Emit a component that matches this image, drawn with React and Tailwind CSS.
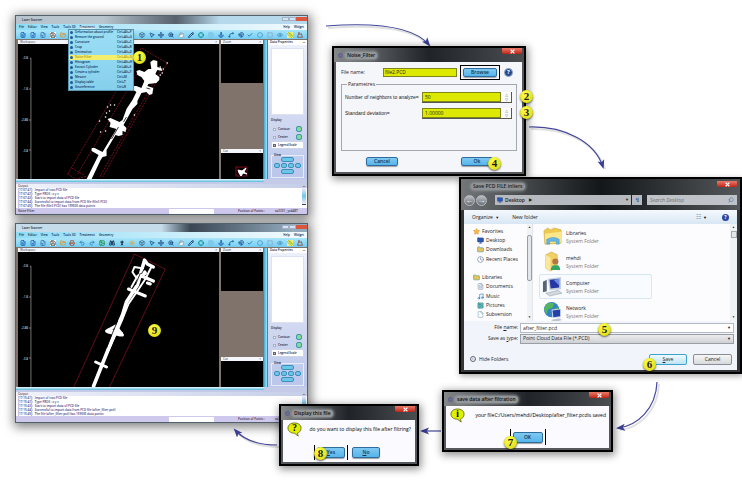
import React from "react";
import {
  FileText, FilePlus, FileInput, Save, FolderOpen, Printer, Undo2, Redo2, Image, Binoculars, PersonStanding,
  Sun, Box, MousePointer2, Move, ZoomIn, Hand, Pencil, Crosshair, Grid3x3, Anchor, Spline, Magnet, Check,
  Circle, Square, Eye, Ruler, Mountain, Search, ChevronUp, Star, Monitor, Folder, Clock, Music, FileIcon,
} from "lucide-react";

const TOOLS = [
  [FileText, "text-[#1d5fb5]"], [FilePlus, "text-[#1d5fb5]"], [FileInput, "text-[#3d6db0]"], [Save, "bg-white text-[#444]"],
  [FolderOpen, "text-[#e0932b]"], [Printer, "text-[#a35b4a]"], [Undo2, "text-[#2973b0]"], [Redo2, "text-[#2973b0]"],
  [Image, "text-[#168a3a]"], [Binoculars, "text-[#17314f]"], [PersonStanding, "text-[#111]"], [Sun, "text-[#e7a13c]"],
  [Box, "text-[#3a5f86]"], [MousePointer2, "text-[#1c3f7c]"], [Move, "text-[#1c3f7c]"], [ZoomIn, "text-[#1c3f7c]"],
  [Hand, "fill-white text-[#8899aa]"], [Pencil, "text-[#11285e]"], [Crosshair, "text-[#0c8f8f]"], [Grid3x3, "text-[#7cc4e8]"],
  [Anchor, "text-[#1355a5]"], [Spline, "text-[#1355a5]"], [Magnet, "text-[#123b86]"], [Check, "text-[#1660b2]"],
  [Circle, "text-[#4c96cf]"], [Square, "text-[#8ba6c9]"], [Eye, "text-[#4c90c0]"], [Ruler, "bg-[#e6f07a] text-[#9aa51f]"],
  [Mountain, "text-[#8c3f2e]"],
];

const MENU_ITEMS = [
  ["Deformation about profile", "Ctrl+Alt+P"], ["Remove the ground", "Ctrl+Alt+G"], ["Curvature", "Ctrl+Alt+C"],
  ["Crop", "Ctrl+Alt+R"], ["Decimation", "Ctrl+Alt+D"], ["Noise Filter", "Ctrl+Alt+N"], ["Histogram", "Ctrl+Alt+H"],
  ["Extract Cylinder", "Ctrl+Alt+E"], ["Create a cylinder", "Ctrl+Alt+Y"], ["Mesure", "Ctrl+M"],
  ["Display table", "Ctrl+T"], ["Georeference", "Ctrl+R"],
];

function Badge({ n, className }) {
  return (
    <span className={`absolute z-20 flex h-[13px] w-[13px] items-center justify-center rounded-full bg-[#eeee22] bg-radial-[at_40%_30%] from-[#ffff4a] to-[#d6d30c] font-['Liberation_Serif',serif] text-[11px] leading-none font-bold text-[#222] shadow-[0_1px_2px_rgba(0,0,0,0.6)] ${className}`}>
      {n}
    </span>
  );
}

function CloseButton({ className = "" }) {
  return (
    <button aria-label="Close" className={`flex h-[6px] w-[20px] shrink-0 items-center justify-center rounded-b-xs bg-linear-to-b from-[#e87868] to-[#c01c10] ${className}`}>
      <svg viewBox="0 0 8 8" className="h-[5px] w-[5px]"><path d="M1 1L7 7M7 1L1 7" stroke="#fff" strokeWidth="2" /></svg>
    </button>
  );
}

function RawCloud() {
  return (
    <svg viewBox="18 43 202 135" preserveAspectRatio="none" className="h-full w-full">
      <Axis top={57} bottom={178} />
      <g fill="none" stroke="#a3152a" strokeWidth="0.7" strokeDasharray="2 1">
        <path d="M68 173L142 47L168 62L103 176M78 173L138 72M100 176L163 66M68 173L76 178L88 175M72 167L84 174" />
      </g>
      <path fill="#fff" d="M151 61L154 59L158 60L158 66L162 67L163 70L158 69L156 73L160 76L160 79L157 82L149 83L148 85L154 87L153 93L150 94L147 91L142 92L138 100L138 103L133 108L128 117L124 124L127 127L126 131L123 130L123 134L119 135L116 134L107 149L107 155L103 156L101 159L92 178L87 178L99 154L92 150L92 147L95 147L103 151L114 133L117 128L110 126L111 122L108 118L111 117L120 121L123 119L127 108L133 99L137 91L134 89L134 85L137 85L142 87L145 80L142 76L138 74L137 70L140 69L145 71L149 68L152 68Z" />
      <path stroke="#111" strokeWidth="0.8" fill="none" d="M127 116L124 121M119 126L112 138M147 87L151 88" />
      <g fill="#fff">
        {[[108, 106], [111, 104], [115, 104], [107, 112], [110, 110], [106, 116], [100, 120], [106, 130], [101, 131], [161, 66], [164, 68], [163, 72], [168, 62], [161, 74], [135, 114]].map(([x, y]) => (
          <circle key={`${x}-${y}`} cx={x} cy={y} r="0.8" />
        ))}
      </g>
    </svg>
  );
}

function FilteredCloud() {
  return (
    <svg viewBox="18 251 202 135" preserveAspectRatio="none" className="h-full w-full">
      <Axis top={265} bottom={386} />
      <path fill="none" stroke="#a3152a" strokeWidth="0.6" d="M74 386L135 253L166 268L110 386" />
      <g fill="none" stroke="#fff" strokeLinecap="round" strokeLinejoin="round">
        <path strokeWidth="3.6" d="M145 260L142 270L138 284L127 301L123 314L116 330L108 350L94 385" />
        <path strokeWidth="2" d="M152 266L146 278L138 290L129 303L123 318L115 336L106 356" />
        <path strokeWidth="3.4" d="M145 259L148 263L154 266M142 275L154 280" />
        <path strokeWidth="3" d="M129 288L146 295" />
        <path strokeWidth="2" d="M141 267L135 266L133 271L137 277L132 286" />
        <path strokeWidth="3" d="M96 361L107 366" />
        <path strokeWidth="5" d="M139 276L145 272M109 330L121 333" />
        <path strokeWidth="3" d="M107 330L116 325L123 334M148 282L151 283" />
      </g>
      <path d="M141 272L136 284M118 320L113 332L107 347M146 266L142 273" stroke="#000" strokeWidth="0.8" fill="none" />
    </svg>
  );
}

function Axis({ top, bottom }) {
  return (
    <g>
      <path d={`M30 ${top}H31V${bottom}M29 ${top + 31}H31M29 ${top + 62}H31M29 ${top + 92}H31`} fill="none" stroke="#bbb" strokeWidth="0.6" />
      {["-0.8", "-1.8", "-2.88", "-3.8"].map((t, i) => (
        <text key={t} x="28" y={top + 1 + i * 31} textAnchor="end" fontSize="3" fill="#eee">{t}</text>
      ))}
    </g>
  );
}

function PaneTitle({ children }) {
  return (
    <div className="flex h-[4px] shrink-0 items-center justify-between bg-[#f4f6fb] px-[2px] text-[3px] leading-none text-[#334]">
      <span>{children}</span><span>×</span>
    </div>
  );
}

function SidePanel() {
  return (
    <aside className="flex w-[39px] shrink-0 flex-col bg-linear-to-b from-[#eef2fb] via-[#d5dbf2] to-[#b9c6ea] px-[3px] text-[3px] leading-none font-semibold text-[#223]">
      <div className="-mx-[3px] flex h-[5px] items-center justify-between bg-white px-[2px]"><span>Data Properties</span><span>▪▪</span></div>
      <div className="mt-[3px] h-[67px] border border-[#dde2f0] bg-white" />
      <div className="mt-[4px] h-[6px]">Display</div>
      {["Contour", "Center"].map((t) => (
        <label key={t} className="flex h-[8px] items-center gap-[2px] pl-[2px]">
          <input type="checkbox" className="h-[3px] w-[3px] appearance-none border border-[#9fb0d2] bg-white" />
          <span className="flex-1">{t}</span>
          <span className="mr-[2px] h-[6px] w-[6px] rounded-xs border border-[#3b99a8] bg-[#86d79c]" />
        </label>
      ))}
      <label className="flex h-[8px] items-center gap-[2px] border border-[#cdd5ea] bg-white pl-px">
        <input type="checkbox" defaultChecked className="h-[3px] w-[3px] appearance-none border border-[#667] bg-[#a8b8cf]" />
        Legend Scale
      </label>
      <fieldset className="mt-[5px] flex h-[24px] flex-col items-center border border-[#e6ebf8]">
        <legend className="ml-[2px] h-[3px] text-[3px]">View</legend>
        <button className="h-[5px] w-[13px] rounded-xs border border-[#3b8fb8] bg-[#6cc6ea]" aria-label="Top" />
        <div className="my-px flex gap-px">
          {["Left", "Front", "Right", "Back"].map((t) => (
            <button key={t} aria-label={t} className="h-[5px] w-[6px] rounded-xs border border-[#3b8fb8] bg-[#6cc6ea]" />
          ))}
        </div>
        <button className="h-[5px] w-[13px] rounded-xs border border-[#3b8fb8] bg-[#6cc6ea]" aria-label="Bottom" />
      </fieldset>
    </aside>
  );
}

function ScannerWindow({ className, titleClass, cloud, cut, file, status, times, menuOpen, children }) {
  return (
    <section className={`absolute flex h-[200px] w-[293px] flex-col border border-[#52616e] bg-[#d8def4] shadow-[1px_2px_10px_2px_rgba(0,0,0,0.5)] ${className}`}>
      <header className={`flex h-[8px] shrink-0 items-center justify-between pl-[6px] text-[3px] leading-none font-semibold text-[#223] ${titleClass}`}>
        <span>Laser Scanner</span>
        <div className="flex h-[5px] items-center self-start">
          <button aria-label="Minimize" className="h-[4px] w-[7px] border border-[#a2b2c4] bg-[#d7e3ee]" />
          <button aria-label="Maximize" className="h-[4px] w-[7px] border border-[#a2b2c4] bg-[#d7e3ee]" />
          <button aria-label="Close" className="h-[4px] w-[11px] bg-[#d9573f]" />
        </div>
      </header>
      <nav className="flex h-[6px] shrink-0 items-center gap-[4px] bg-linear-to-r from-[#8edcf6] via-[#c4ecfa] to-[#f4fafd] px-[3px] text-[3px] leading-none font-semibold text-[#0e2a4c]">
        {["File", "Editor", "View", "Tools", "Tools 3D", "Treatment", "Geometry"].map((t) => (
          <button key={t} className={menuOpen && t === "Treatment" ? "bg-[#d8f3fc] whitespace-nowrap" : "whitespace-nowrap"}>{t}</button>
        ))}
        <button className="ml-auto">Help</button>
        <button>Widget</button>
      </nav>
      <div className="flex h-[9px] shrink-0 items-center justify-between bg-linear-to-b from-[#a9e5fa] to-[#72cdf2] px-[4px]">
        {TOOLS.map(([Icon, c], i) => <Icon key={i} className={`h-[6px] w-[6px] ${c}`} strokeWidth={3} />)}
      </div>
      <div className="flex h-[140px] shrink-0 bg-[#7f736b] pt-px">
        <div className="mx-[2px] flex min-w-0 flex-1 flex-col bg-black">
          <PaneTitle>Workspace</PaneTitle>
          <div className="h-[135px]">{cloud}</div>
        </div>
        <div className="flex w-[42px] flex-col justify-between">
          <div className="h-[43px] bg-black"><PaneTitle>Zoom</PaneTitle></div>
          <div className="h-[30px] bg-black"><PaneTitle>Cut</PaneTitle>{cut}</div>
        </div>
        <div className="mx-px w-[3px] bg-linear-to-r from-[#3eaad4] to-[#9be4fa]" />
        <SidePanel />
      </div>
      <div className="flex h-[5px] shrink-0 bg-[#c3cbe8]">
        <div className="h-[3px] w-[248px] bg-linear-to-b from-[#e9f8fd] to-[#4eb9da]" />
      </div>
      <div className="flex h-[4px] shrink-0 items-center justify-between bg-linear-to-r from-[#f1f3fa] to-[#c5cee9] px-[2px] text-[3px] leading-none text-[#412]"><span>Output</span><span>▪▪</span></div>
      <div className="flex h-[20px] shrink-0 justify-between bg-white text-[3px] leading-[4px] font-semibold text-[#3b3b86]">
        <ul className="pl-[2px]">
          {["Import of tran PCD file", "Type PRDS : x y z", "Start to import data of PCD file", `Successful to import data from PCD file (${file})`, `The file (${file}) has 159505 data points`].map((t, i) => (
            <li key={t} className="flex h-[4px] gap-[2px] whitespace-nowrap"><span>[{times}:{41 + i}]:</span>{t}</li>
          ))}
        </ul>
        <div className="mr-px h-[17px] w-[4px] border-b border-[#445] bg-linear-to-b from-[#eef] via-[#6cc6ea] to-[#eef]" />
      </div>
      <footer className="flex flex-1 items-center bg-[#cfc9ee] px-[2px] text-[3px] leading-none font-semibold text-[#334]">
        <span className="w-[151px]">{status}</span>
        <span className="h-[5px] w-[45px] bg-white" />
        <span className="ml-[24px] whitespace-nowrap">Position of Points :</span>
        <span className="ml-[10px] whitespace-nowrap">x=2231 ; y=4487</span>
      </footer>
      {children}
    </section>
  );
}

function TreatmentMenu() {
  return (
    <ul className="absolute top-[13px] left-[52px] z-10 w-[66px] border border-[#5a93ad] bg-linear-to-b from-[#9bdff5] to-[#86cfec] text-[3px] leading-[5px] font-semibold text-[#0d2d55] shadow-md">
      {MENU_ITEMS.map(([t, k], i) => (
        <li key={t}>
          <button className={`flex h-[5px] w-full items-center px-px ${i === 5 ? "bg-[#f3ee6c] text-[#a89820]" : ""}`}>
            <span className="mr-[2px] h-[3px] w-[3px] rounded-full bg-[#1d5c99]" />
            <span className="flex-1 text-left whitespace-nowrap">{t}</span>
            <span className="w-[15px] text-left whitespace-nowrap">{k}</span>
          </button>
        </li>
      ))}
    </ul>
  );
}

function BlueButton({ children, className = "" }) {
  return (
    <button className={`rounded-[2px] border border-[#2f6c9d] bg-linear-to-b from-[#7fc9f2] to-[#55b4ea] text-[5px] leading-none font-semibold text-[#0f3558] shadow-[0_1px_1px_rgba(0,0,0,0.35)] ${className}`}>
      {children}
    </button>
  );
}

function Dialog({ title, className, children }) {
  return (
    <section className={`absolute flex flex-col border-2 border-black bg-[#55585c] px-[2px] pb-[2px] shadow-[1px_2px_8px_1px_rgba(0,0,0,0.45)] ${className}`}>
      <header className="-mx-[2px] flex h-[14px] shrink-0 items-center bg-linear-to-r from-[#85888b] via-[#202428] to-[#4b4e51] pl-[4px]">
        <span className="h-[5px] w-[5px] rounded-full border border-[#5b5c8d] bg-[#6d6f92]" />
        <h2 className="ml-[2px] rounded-full bg-[#94979a] px-[2px] py-px text-[5px] leading-none font-semibold text-[#111] shadow-[0_0_3px_1px_#94979a]">{title}</h2>
        <CloseButton className="mr-[2px] ml-auto self-start" />
      </header>
      {children}
    </section>
  );
}

function NoiseFilter() {
  return (
    <Dialog title="Noise_Filter" className="top-[46px] left-[332px] h-[130px] w-[194px]">
      <div className="flex flex-1 flex-col bg-[#f5f6fa] px-[5px] text-[5px] leading-none text-[#222]">
        <div className="mt-[2px] flex h-[16px] items-center">
          <label htmlFor="src" className="w-[42px]">File name:</label>
          <input id="src" defaultValue="file2.PCD" className="h-[9px] min-w-0 flex-1 border border-[#7e851a] bg-[#dde900] px-px text-[5px]" />
          <div className="ml-[3px] flex h-[15px] w-[40px] items-center justify-center border border-black bg-[#f5f6fa]">
            <BlueButton className="h-[9px] w-[34px]">Browse</BlueButton>
          </div>
          <button aria-label="Help" className="mx-[4px] flex h-[9px] w-[9px] items-center justify-center rounded-full border border-[#9ab] bg-[#1f4796] text-[6px] leading-none font-bold text-white">?</button>
        </div>
        <fieldset className="mt-[2px] h-[69px] border border-[#a3a7ae] pl-[3px]">
          <legend className="ml-[2px] h-[5px] px-px text-[5px] leading-none">Parametres</legend>
          {[["n", "Number of neighbors to analyze=", "50"], ["s", "Standard deviation=", "1.00000"]].map(([id, l, v]) => (
            <div key={id} className="mt-[5px] flex h-[11px] items-center">
              <label htmlFor={id} className="w-[77px] font-['Liberation_Sans',sans-serif] whitespace-nowrap">{l}</label>
              <div className="flex h-[11px] flex-1 border-r border-b border-[#555] bg-white">
                <input id={id} defaultValue={v} className="h-[10px] min-w-0 flex-1 border border-[#7e851a] bg-[#dde900] px-[2px] text-[5px]" />
                <div className="flex w-[10px] flex-col items-center justify-around text-[4px] leading-none text-[#446]"><span>△</span><span>▽</span></div>
              </div>
              <span className="w-[4px]" />
            </div>
          ))}
        </fieldset>
        <div className="flex flex-1 items-center justify-between pr-[24px] pl-[25px]">
          <BlueButton className="h-[9px] w-[32px]">Cancel</BlueButton>
          <BlueButton className="h-[9px] w-[32px]">Ok</BlueButton>
        </div>
      </div>
    </Dialog>
  );
}

function Bubble({ children }) {
  return (
    <svg viewBox="0 0 16 16" className="h-[15px] w-[15px] shrink-0">
      <path d="M8 1C12 1 15 3.2 15 6.5S12.500 11.500 11 12L12 15L8 12C4 12 1 9.800 1 6.500S4 1 8 1Z" fill="#e1ee00" stroke="#50580a" strokeWidth="0.8" />
      <text x="8" y="10" textAnchor="middle" fontSize="10" fontWeight="bold" fontFamily="Liberation Serif, serif">{children}</text>
    </svg>
  );
}

function FolderArt({ kind }) {
  return (
    <svg viewBox="0 0 22 22" className="h-[21px] w-[21px] shrink-0">
      {kind === "lib" && (<g><path d="M2 5L6 2L9 4L13 2L20 4V18L3 19Z" fill="#edc950" stroke="#d3a83a" strokeWidth=".6" /><path d="M3 8L20 6V17L4 18Z" fill="#fbe88b" /><path d="M5 19V14Q12 10 18 14V19H15V16H8V19Z" fill="#64b6e6" stroke="#3c8ec4" strokeWidth=".5" /></g>)}
      {kind === "user" && (<g><path d="M4 4L10 1L16 4V17L9 21L4 18Z" fill="#f0cf66" stroke="#d0a740" strokeWidth=".6" /><path d="M4 4L9 7V21L4 18Z" fill="#fbe79a" /><circle cx="14" cy="11" r="3.200" fill="#b87542" /><path d="M9 20Q10 14 14 15Q19 14 19 20Z" fill="#35a565" /></g>)}
      {kind === "pc" && (<g><path d="M1 6L5 4V16L1 17Z" fill="#596574" /><path d="M6 3L20 1V14L8 15Z" fill="#c6d0dd" /><path d="M8 4L18 3V12L9 13Z" fill="#2537a3" /><path d="M12 4L18 3V10Z" fill="#718be0" /><path d="M4 18L17 15L21 18L8 21Z" fill="#d2d8de" stroke="#8b98a8" strokeWidth=".5" /></g>)}
      {kind === "net" && (<g><circle cx="10" cy="9" r="8" fill="#3482c5" /><path d="M4 4Q8 0 13 3L11 7L6 9L5 14L2 9ZM13 8L17 6L18 10L14 13Z" fill="#55b55c" /><path d="M10 9L20 8V17L11 18Z" fill="#d4dce8" /><path d="M11 10L19 9V16L12 17Z" fill="#2440ab" /><path d="M9 20L18 18L21 20L14 22Z" fill="#bdc6d0" /></g>)}
    </svg>
  );
}

const NAV = [
  [Star, "Favorites", "fill-[#f6b94a] text-[#e69a2e]", true], [Monitor, "Desktop", "fill-[#2d57b5] text-[#24468f]"],
  [Folder, "Downloads", "fill-[#eac555] text-[#3d8bbd]"], [Clock, "Recent Places", "text-[#60779a]"], null,
  [Folder, "Libraries", "fill-[#eac555] text-[#3f9d9b]", true], [FileText, "Documents", "text-[#7991ab]"], [Music, "Music", "text-[#1d74bd]"],
  [Image, "Pictures", "fill-[#66b9b9] text-[#37888e]"], [FileIcon, "Subversion", "text-[#7aa2bd]"],
];

function SaveDialog() {
  return (
    <section className="absolute top-[177px] left-[459px] flex h-[197px] w-[283px] flex-col border-2 border-black bg-[#34373a] px-[3px] pb-[2px] text-[5px] leading-none text-[#222] shadow-[1px_2px_6px_rgba(0,0,0,0.35)]">
      <header className="-mx-[3px] flex h-[31px] shrink-0 flex-col bg-linear-to-r from-[#73777a] via-[#141719] to-[#55585a] px-[3px]">
        <div className="flex h-[15px] items-center pl-[7px]">
          <h2 className="rounded-full bg-[#909396] px-[2px] py-px text-[5px] leading-none font-semibold shadow-[0_0_3px_1px_#909396]">Save PCD FILE inliers</h2>
          <CloseButton className="mt-[2px] ml-auto self-start" />
        </div>
        <div className="flex h-[12px] items-center">
          {["←", "→"].map((a) => (
            <button key={a} aria-label={a === "←" ? "Back" : "Forward"} className="mr-px h-[11px] w-[11px] rounded-full border border-[#bbb] bg-linear-to-b from-[#b9bfc5] to-[#687078] text-[8px] leading-none text-white">{a}</button>
          ))}
          <div className="ml-[7px] flex h-[10px] flex-1 items-center bg-[#b6babf] px-[2px] font-semibold">
            <Monitor className="mr-[2px] h-[6px] w-[6px] fill-[#2d57b5] text-[#24468f]" />Desktop<span className="ml-[4px] text-[4px]">▶</span><span className="ml-auto text-[4px]">▼</span>
          </div>
          <button aria-label="Refresh" className="ml-px h-[10px] w-[10px] bg-[#b6babf] text-[6px] leading-none text-[#23539a]">↯</button>
          <div className="ml-[5px] flex h-[10px] w-[90px] items-center bg-[#bfc3c7] px-[3px]">
            <input aria-label="Search Desktop" placeholder="Search Desktop" className="min-w-0 flex-1 text-[5px] italic placeholder:text-[#6c7177]" />
            <Search className="h-[6px] w-[6px] -scale-x-100 text-[#3e66a2]" />
          </div>
        </div>
      </header>
      <div className="flex h-[14px] shrink-0 items-center bg-linear-to-b from-[#f4f9fd] to-[#d8e7f4] px-[8px]">
        <button>Organize <span className="ml-px text-[4px]">▼</span></button>
        <button className="ml-[13px]">New folder</button>
        <button className="ml-auto text-[6px] text-[#678]">☷ <span className="text-[4px] text-black">▼</span></button>
        <button aria-label="Help" className="ml-[15px] h-[7px] w-[7px] rounded-full bg-[#2b45a0] text-[5px] leading-none font-bold text-white">?</button>
      </div>
      <div className="flex h-[97px] shrink-0 overflow-hidden bg-[#fcfcff]">
        <nav className="flex w-[63px] flex-col justify-between pt-[3px] pb-[2px]">
          {NAV.map((n, i) => {
            if (!n) return <span key={i} className="h-[9px]" />;
            const [Icon, t, c, top] = n;
            return (
              <a href="#" key={t} className={`flex h-[9px] items-center gap-[2px] whitespace-nowrap ${top ? "pl-[9px]" : "pl-[13px]"}`}>
                <Icon className={`h-[7px] w-[7px] ${c}`} />{t}
              </a>
            );
          })}
        </nav>
        <div className="flex w-[6px] flex-col items-center justify-between border-r border-[#e2e5ec] bg-[#f1f2f5] py-[2px] text-[3px]">
          <span>▲</span><span className="-mt-[30px] h-[46px] w-[5px] rounded-xs border border-[#9a9da3] bg-[#e4e6e9]" /><span>▼</span>
        </div>
        <div className="flex flex-1 flex-col pl-[6px]">
          {[["lib", "Libraries"], ["user", "mehdi"], ["pc", "Computer"], ["net", "Network"]].map(([k, t]) => (
            <div key={k} className={`flex h-[25px] w-[113px] shrink-0 items-center gap-[3px] border pl-[2px] ${k === "pc" ? "rounded-xs border-[#d8e6f2] bg-[#f8fbff]" : "border-transparent"}`}>
              <FolderArt kind={k} />
              <div className="leading-[8px]"><p>{t}</p><p className="text-[#777]">System Folder</p></div>
            </div>
          ))}
        </div>
        <div className="flex w-[7px] flex-col items-center bg-[#f1f2f5] py-[2px] text-[3px]">
          <span>▲</span><span className="mt-[2px] h-[7px] w-[6px] border border-[#a5a8ae] bg-[#e4e6e9]" /><span className="mt-auto">▼</span>
        </div>
      </div>
      <div className="flex flex-1 flex-col bg-[#f1f4fa] px-[3px] pt-px">
        <div className="flex h-[11px] items-center">
          <label htmlFor="fn" className="w-[53px] pr-[2px] text-right">File <u>n</u>ame:</label>
          <div className="flex h-[10px] flex-1 items-center border border-[#b4bac4] bg-white px-[2px]">
            <input id="fn" defaultValue="after_filter.pcd" className="min-w-0 flex-1 text-[5px]" /><span className="text-[4px]">▼</span>
          </div>
        </div>
        <div className="flex h-[11px] items-center">
          <label htmlFor="ft" className="w-[53px] pr-[2px] text-right">Save as <u>t</u>ype:</label>
          <div className="flex h-[10px] flex-1 items-center border border-[#9a9ea6] bg-linear-to-b from-[#ececee] to-[#cfd1d5] px-[2px]">
            <select id="ft" className="min-w-0 flex-1 appearance-none text-[5px]"><option>Point Cloud Data File (*.PCD)</option></select><span className="text-[4px]">▼</span>
          </div>
        </div>
        <div className="flex flex-1 items-center pt-[4px] pl-[3px]">
          <button className="flex items-center gap-[3px]"><ChevronUp className="h-[6px] w-[6px] rounded-full border border-[#667]" />Hide Folders</button>
          <button className="ml-auto h-[11px] w-[38px] rounded-xs border border-[#3aa2cc] bg-linear-to-b from-[#eefaff] to-[#bfe4f4]"><u>S</u>ave</button>
          <button className="mr-[2px] ml-[6px] h-[11px] w-[39px] rounded-xs border border-[#8a8d93] bg-linear-to-b from-[#f6f6f6] to-[#d8d9db]">Cancel</button>
        </div>
      </div>
    </section>
  );
}

function Arrows() {
  return (
    <svg viewBox="0 0 742 480" className="absolute h-[480px] w-[742px]" aria-hidden="true">
      <defs>
        <marker id="head" markerUnits="userSpaceOnUse" markerWidth="10" markerHeight="8" refX="7" refY="4" orient="auto">
          <path d="M0 0.500L9 4L0 7.500L2 4Z" fill="#3c3f96" />
        </marker>
      </defs>
      <g transform="translate(2 2)" fill="none" stroke="#000" strokeOpacity=".12" strokeWidth="2">
        <path d="M326 26C365 23 412 24 429 45M529 127C565 126 595 142 603 167M657 382C656 409 637 426 618 428M277 445C259 445 244 440 235 430" />
      </g>
      <g fill="none" stroke="#44479b" strokeWidth="1.2">
        <path d="M326 26C365 23 412 24 429 45" markerEnd="url(#head)" />
        <path d="M529 127C565 126 595 142 603 167" markerEnd="url(#head)" />
        <path d="M657 382C656 409 637 426 618 428" markerEnd="url(#head)" />
        <path d="M441 431H422" markerEnd="url(#head)" />
        <path d="M277 445C259 445 244 440 235 430" markerEnd="url(#head)" />
      </g>
    </svg>
  );
}

export default function App() {
  return (
    <main className="relative min-h-[480px] overflow-hidden bg-white font-['Open_Sans','Noto_Sans',sans-serif]">
      <ScannerWindow
        className="top-[15px] left-[15px]"
        titleClass="bg-linear-to-r from-[#b8c5ce] from-30% via-[#56616d] via-55% to-[#b7d9ec] to-70%"
        cloud={<RawCloud />}
        cut={<svg viewBox="0 0 42 25" className="h-[25px] w-[42px]"><rect x="15" y="14" width="11" height="9" fill="none" stroke="#b3122b" strokeWidth=".7" /><path d="M17 17L21 18L25 15L23 19L26 21L22 20L20 23L18 20Z" fill="#fff" stroke="#fff" /></svg>}
        file="file2.PCD" status="Noise Filter" times="17:07" menuOpen
      >
        <TreatmentMenu />
      </ScannerWindow>
      <ScannerWindow
        className="top-[223px] left-[15px]"
        titleClass="bg-linear-to-r from-[#c5dcea] from-50% via-[#3a4654] via-60% to-[#93abbd] to-95%"
        cloud={<FilteredCloud />} file="after_filter.pcd" status="" times="17:15"
      />
      <Arrows />
      <NoiseFilter />
      <SaveDialog />
      <Dialog title="save data after filtration" className="top-[390px] left-[442px] h-[62px] w-[171px]">
        <div className="flex flex-1 flex-col items-center justify-between bg-[#fafaff] pb-[3px] text-[5px]">
          <div className="flex w-full items-center justify-between pt-[2px] pr-[3px] pl-[4px]"><Bubble>i</Bubble><p className="whitespace-nowrap">your fileC:/Users/mehdi/Desktop/after_filter.pcdis saved</p></div>
          <div className="flex h-[16px] w-[36px] items-center border-x border-black px-[2px]"><BlueButton className="h-[11px] flex-1">OK</BlueButton></div>
        </div>
      </Dialog>
      <Dialog title="Display this file" className="top-[404px] left-[279px] h-[62px] w-[140px]">
        <div className="flex flex-1 flex-col justify-between bg-[#fafaff] pb-[2px] text-[5px]">
          <div className="flex w-full items-center justify-between pt-[2px] pr-[4px] pl-[4px]"><Bubble>?</Bubble><p className="whitespace-nowrap">do you want to display this file after filtring?</p></div>
          <div className="flex items-center gap-[4px] pl-[31px]">
            <div className="flex h-[15px] w-[34px] items-center border-x border-black px-[2px]"><BlueButton className="h-[11px] flex-1"><u>Y</u>es</BlueButton></div>
            <BlueButton className="h-[11px] w-[28px]"><u>N</u>o</BlueButton>
          </div>
        </div>
      </Dialog>
      <Badge n="1" className="top-[51px] left-[133px]" />
      <Badge n="2" className="top-[90px] left-[520px]" />
      <Badge n="3" className="top-[106px] left-[520px]" />
      <Badge n="4" className="top-[157px] left-[488px]" />
      <Badge n="5" className="top-[323px] left-[598px]" />
      <Badge n="6" className="top-[358px] left-[643px]" />
      <Badge n="7" className="top-[436px] left-[504px]" />
      <Badge n="8" className="top-[447px] left-[314px]" />
      <Badge n="9" className="top-[324px] left-[148px]" />
    </main>
  );
}
